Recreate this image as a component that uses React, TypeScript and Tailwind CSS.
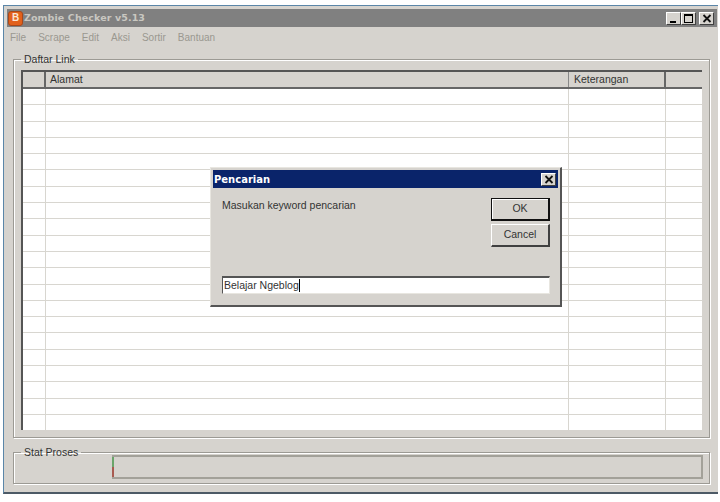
const FONT = "font-['Liberation_Sans',Arial,sans-serif]";

function WinButton({ children, className = "" }: { children: React.ReactNode; className?: string }) {
  return (
    <div className={"w-[15px] h-[13px] bg-[#d6d3ce] border border-t-white border-l-white border-r-[#404040] border-b-[#404040] flex items-center justify-center " + className}>
      {children}
    </div>
  );
}

function CloseGlyph() {
  return (
    <svg width="10" height="9" viewBox="0 0 10 9">
      <path d="M1.5 1 L8.5 8 M8.5 1 L1.5 8" stroke="#111" strokeWidth="1.8" />
    </svg>
  );
}

function BloggerIcon() {
  return (
    <div className="w-[15px] h-[15px] rounded-[3px] bg-[#e2611c] border border-[#a8481a] flex items-center justify-center text-[10px] font-bold text-[#fbe6d4] leading-none">
      B
    </div>
  );
}

function Dialog() {
  return (
    <div className="absolute left-[210px] top-[167px] w-[352px] h-[140px] bg-[#d6d3ce] border border-t-[#e8e6e0] border-l-[#e8e6e0] border-r-[#555] border-b-[#555] border-b-2 border-r-2 pl-[2px] pr-[2px] pt-[2px] flex flex-col">
      <div className="h-[18px] shrink-0 bg-[#0a246a] flex items-center justify-between pl-[1px] pr-[2px]">
        <span className="text-white text-[10px] font-bold font-['DejaVu_Sans',sans-serif]">Pencarian</span>
        <WinButton><CloseGlyph /></WinButton>
      </div>
      <div className="flex justify-between pl-[9px] pr-[8px] pt-[10px]">
        <span className="text-[10.5px] text-[#333] leading-[15px]">Masukan keyword pencarian</span>
        <div className="flex flex-col gap-[3px]">
          <div className="w-[59px] h-[23px] border border-[#111] border-r-2 border-b-2 flex items-center justify-center text-[10.5px] text-[#333] shadow-[inset_1px_1px_0_#fff]">OK</div>
          <div className="w-[59px] h-[23px] border border-t-white border-l-white border-r-[#404040] border-b-[#404040] border-b-2 border-r-2 flex items-center justify-center text-[10.5px] text-[#333]">Cancel</div>
        </div>
      </div>
      <div className="mt-[29px] ml-[9px] mr-[8px] h-[18px] shrink-0 bg-white border border-t-[#555] border-l-[#555] border-r-[#e8e6e0] border-b-[#e8e6e0] border-t-2 flex items-center pl-[1px] text-[10.5px] text-[#333]">
        Belajar Ngeblog<span className="w-px h-[13px] bg-black" />
      </div>
    </div>
  );
}

const rows = Array.from({ length: 21 }, (_, i) => i);

export default function App() {
  return (
    <div className={"relative w-[720px] h-[502px] bg-white pl-[3px] pr-[2px] pt-[5px] pb-[8px] overflow-hidden " + FONT}>
      <div className="h-full bg-[#d6d3ce] border-t border-l border-[#5b86a8] border-b-2 border-b-[#4d5a66] pt-[3px] pl-[3px] pr-[1px] flex flex-col">
        <div className="h-[18px] shrink-0 bg-[#808080] flex items-center justify-between pl-[1px] pr-[3px]">
          <div className="flex items-center gap-[1px]">
            <BloggerIcon />
            <span className="text-[9.5px] font-bold text-[#c9c7c1] font-['DejaVu_Sans',sans-serif] tracking-[0.1px]">Zombie Checker v5.13</span>
          </div>
          <div className="flex items-center">
            <WinButton>
              <div className="w-[6px] h-[2px] bg-black mt-[7px] mr-[1px]" />
            </WinButton>
            <WinButton className="mr-[3px]">
              <div className="w-[9px] h-[9px] border border-black border-t-2" />
            </WinButton>
            <WinButton><CloseGlyph /></WinButton>
          </div>
        </div>
        <div className="h-[20px] shrink-0 flex items-center gap-[12px] pl-[3px] text-[10px] text-[#9a9890]">
          <span>File</span>
          <span>Scrape</span>
          <span>Edit</span>
          <span>Aksi</span>
          <span>Sortir</span>
          <span>Bantuan</span>
        </div>
        <fieldset className="mt-[6px] ml-[6px] mr-[7px] h-[385px] border border-[#9c9a94] shadow-[inset_1px_1px_0_#fff,1px_1px_0_#fff] px-[7px] min-w-0">
          <legend className="px-[3px] text-[10.5px] leading-[12px] text-[#333]">Daftar Link</legend>
          <div className="h-[360px] mt-[5px] border-t-2 border-l-2 border-[#555] bg-white overflow-hidden">
            <div className="h-[17px] flex bg-[#d6d3ce] border-b-2 border-[#666] text-[10.5px] text-[#333] leading-[15px]">
              <div className="w-[23px] border-r-2 border-[#666]" />
              <div className="w-[523px] pl-[4px] border-r border-[#888]">Alamat</div>
              <div className="w-[97px] pl-[5px] border-r-2 border-[#666]">Keterangan</div>
              <div className="flex-1" />
            </div>
            {rows.map((r) => (
              <div key={r} className="h-[16.3px] flex border-b border-[#d8d6d0]">
                <div className="w-[23px] border-r border-[#d8d6d0]" />
                <div className="w-[523px] border-r border-[#d8d6d0]" />
                <div className="w-[97px] border-r border-[#d8d6d0]" />
                <div className="flex-1" />
              </div>
            ))}
          </div>
        </fieldset>
        <fieldset className="mt-[8px] ml-[6px] mr-[7px] h-[38px] border border-[#9c9a94] shadow-[inset_1px_1px_0_#fff,1px_1px_0_#fff] px-[7px] min-w-0">
          <legend className="px-[3px] text-[10.5px] leading-[12px] text-[#333]">Stat Proses</legend>
          <div className="h-[24px] -mt-[3px] ml-[91px] -mr-px border-2 border-[#a3a199] border-l-0 flex">
            <div className="w-[2px] h-full flex flex-col">
              <div className="h-1/2 bg-[#6aa56a]" />
              <div className="h-1/2 bg-[#a85a50]" />
            </div>
          </div>
        </fieldset>
      </div>
      <Dialog />
    </div>
  );
}
